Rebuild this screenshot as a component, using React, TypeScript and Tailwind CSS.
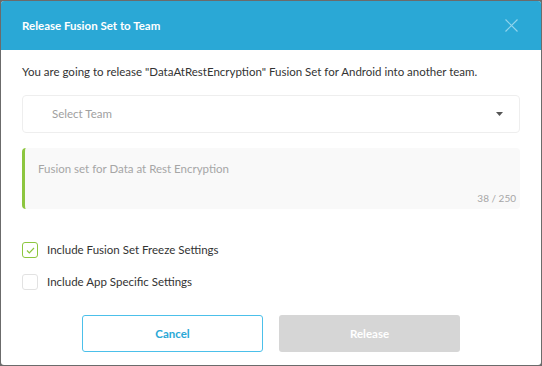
export default function App() {
  return (
    <div className="w-[542px] h-[366px] bg-[#6b6b6b] p-px" style={{ fontFamily: "Lato, 'Noto Sans', sans-serif" }}>
      <div className="h-full w-full bg-white rounded-[3px] overflow-hidden flex flex-col">
        <div className="h-[49px] bg-[#2aa8d6] flex items-center justify-between pl-[21px] pr-[23px] shrink-0">
          <h1 className="text-white font-bold text-[11.5px]">Release Fusion Set to Team</h1>
          <svg width="13" height="13" viewBox="0 0 13 13">
            <path d="M0.5 0.5l12 12M12.5 0.5l-12 12" stroke="#8fd3ec" strokeWidth="1.2" fill="none" />
          </svg>
        </div>

        <div className="px-[21px] pt-[14px] flex flex-col">
          <p className="text-[11.5px] text-[#333] leading-[15px]">
            You are going to release "DataAtRestEncryption" Fusion Set for Android into another team.
          </p>

          <div className="mt-[16px] h-[38px] border border-[#eeeeee] rounded-[4px] flex items-center justify-between pl-[29px] pr-[16px]">
            <span className="text-[11.5px] text-[#a0a0a0]">Select Team</span>
            <svg width="7" height="4" viewBox="0 0 7 4"><path d="M0 0h7L3.5 4z" fill="#555" /></svg>
          </div>

          <div className="mt-[15px] h-[61px] bg-[#f9f9f9] rounded-[4px] border-l-[3px] border-[#8dc63f] flex flex-col pl-[13px] pr-[4px] pt-[14px] pb-[3px]">
            <span className="text-[11.5px] text-[#a6a6a6] leading-[14px]">Fusion set for Data at Rest Encryption</span>
            <span className="mt-auto self-end text-[10px] text-[#a6a6a6]">38 / 250</span>
          </div>

          <div className="mt-[33px] flex flex-col gap-[16px]">
            <label className="flex items-center gap-[9px] h-[16px]">
              <span className="w-[16px] h-[16px] rounded-[3px] border border-[#8dc63f] flex items-center justify-center">
                <svg width="9" height="7" viewBox="0 0 9 7"><path d="M1 3.5l2.3 2.3L8 1" fill="none" stroke="#8dc63f" strokeWidth="1.2" /></svg>
              </span>
              <span className="text-[11.5px] text-[#333]">Include Fusion Set Freeze Settings</span>
            </label>
            <label className="flex items-center gap-[9px] h-[16px]">
              <span className="w-[16px] h-[16px] rounded-[3px] border border-[#e2e2e2]" />
              <span className="text-[11.5px] text-[#333]">Include App Specific Settings</span>
            </label>
          </div>

          <div className="mt-[25px] flex justify-center gap-[16px]">
            <button className="w-[181px] h-[37px] rounded-[3px] border border-[#4cc0ea] text-[#2aa8d6] font-bold text-[11.5px]">Cancel</button>
            <button className="w-[181px] h-[37px] rounded-[3px] bg-[#d6d6d6] text-white font-bold text-[11.5px]">Release</button>
          </div>
        </div>
      </div>
    </div>
  )
}
